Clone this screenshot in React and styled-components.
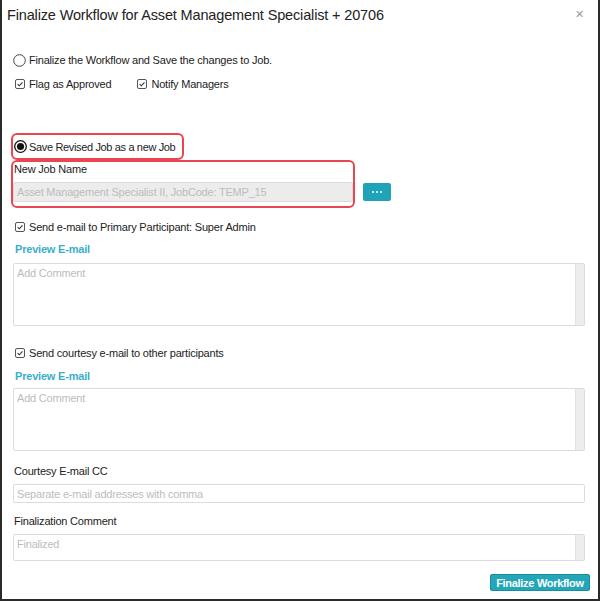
import styled, { createGlobalStyle } from "styled-components";

const GlobalStyle = createGlobalStyle`
  body {
    margin: 0;
    font-family: "Liberation Sans", Arial, sans-serif;
    color: #222;
  }
`;

const Dialog = styled.div`
  box-sizing: border-box;
  width: 600px;
  height: 601px;
  background: #fff;
  border-left: 2px solid #2a2a2a;
  border-right: 2px solid #2a2a2a;
  border-bottom: 2px solid #2a2a2a;
  display: flex;
  flex-direction: column;
  letter-spacing: -0.2px;
`;

const Header = styled.div`
  display: flex;
  justify-content: space-between;
  align-items: center;
  height: 30px;
  padding: 0 14px 0 5px;
`;

const Title = styled.h1`
  margin: 0;
  font-size: 14.5px;
  font-weight: normal;
  letter-spacing: -0.15px;
  color: #222;
`;

const Close = styled.button`
  border: none;
  background: none;
  padding: 0 0 2px;
  color: #999;
  font-size: 11px;
  line-height: 1;
  cursor: pointer;
`;

const Body = styled.div`
  display: flex;
  flex-direction: column;
  padding: 0 13px 0 9px;
`;

const Row = styled.label`
  display: flex;
  align-items: center;
  gap: ${(p) => p.$gap || 0}px;
  height: 14px;
  margin-top: ${(p) => p.$top || 0}px;
  padding-left: ${(p) => p.$indent || 0}px;
  font-size: 11px;
  line-height: 14px;
  white-space: nowrap;
  letter-spacing: ${(p) => p.$tight ? "-0.35px" : "inherit"};
  color: #222;
`;

const Option = styled.span`
  display: inline-flex;
  align-items: center;
  gap: ${(p) => p.$gap || 4}px;
`;

const Highlight = styled.div`
  box-sizing: border-box;
  width: ${(p) => p.$width}px;
  border: 2px solid #e9464f;
  border-radius: 6px;
`;

const RadioBox = styled(Highlight)`
  margin-top: 42px;
  height: 27px;
  display: flex;
  align-items: center;
  padding-left: 1px;
`;

const NameRow = styled.div`
  display: flex;
  align-items: flex-end;
`;

const NameBox = styled(Highlight)`
  display: flex;
  flex-direction: column;
  padding-bottom: 4px;
`;

const Label = styled.div`
  font-size: 11px;
  line-height: 14px;
  color: #222;
  margin-top: ${(p) => p.$top || 0}px;
  padding-left: ${(p) => p.$indent ?? 3}px;
`;

const TextInput = styled.input`
  box-sizing: border-box;
  width: ${(p) => (p.$width ? `${p.$width}px` : "auto")};
  height: ${(p) => p.$height || 20}px;
  margin: ${(p) => p.$top || 0}px 0 0 ${(p) => p.$left || 0}px;
  padding: 0 3px;
  border: 1px solid #dcdcdc;
  border-radius: 2px;
  background: ${(p) => (p.disabled ? "#ececec" : "#fff")};
  font-family: inherit;
  font-size: 11px;
  letter-spacing: -0.2px;
  color: #222;

  &::placeholder {
    color: #bcbcbc;
  }
`;

const DotsButton = styled.button`
  width: 28px;
  height: 18px;
  margin: 0 0 7px 8px;
  padding: 0;
  border: none;
  border-radius: 2px;
  background: #1fa3b6;
  display: flex;
  align-items: center;
  justify-content: center;
  gap: 2px;
  cursor: pointer;
`;

const Dot = styled.span`
  width: 2px;
  height: 2px;
  border-radius: 50%;
  background: #fff;
`;

const PreviewLink = styled.a`
  display: block;
  margin-top: ${(p) => p.$top || 0}px;
  padding-left: 4px;
  font-size: 11px;
  line-height: 14px;
  font-weight: bold;
  color: #3aaec9;
  text-decoration: none;
  cursor: pointer;
`;

const Comment = styled.textarea`
  box-sizing: border-box;
  display: block;
  width: 572px;
  height: ${(p) => p.$height}px;
  margin: ${(p) => p.$top || 0}px 0 0 2px;
  padding: 2px 3px;
  border: 1px solid #dcdcdc;
  border-radius: 2px;
  resize: none;
  overflow: hidden;
  background: linear-gradient(
    to left,
    #ededed 8px,
    #e2e2e2 8px,
    #e2e2e2 9px,
    #fff 9px
  );
  font-family: inherit;
  font-size: 11px;
  line-height: 14px;
  letter-spacing: -0.2px;
  color: #222;

  &::placeholder {
    color: #bcbcbc;
  }
`;

const Footer = styled.div`
  display: flex;
  justify-content: flex-end;
  padding: 13px 8px 0 0;
`;

const PrimaryButton = styled.button`
  box-sizing: border-box;
  width: 100px;
  height: 17px;
  padding: 0;
  border: 1px solid #1a8e9e;
  border-radius: 2px;
  background: #22a6b8;
  color: #fff;
  font-family: inherit;
  font-size: 11px;
  font-weight: bold;
  letter-spacing: -0.3px;
  cursor: pointer;
`;

function Radio({ checked }) {
  return (
    <svg width="13" height="13" viewBox="0 0 13 13">
      <circle
        cx="6.5"
        cy="6.5"
        r="5.8"
        fill="#fff"
        stroke={checked ? "#111" : "#444"}
        strokeWidth={checked ? 1.3 : 1}
      />
      {checked && <circle cx="6.5" cy="6.5" r="3.6" fill="#111" />}
    </svg>
  );
}

function Check() {
  return (
    <svg width="10" height="10" viewBox="0 0 10 10">
      <rect
        x="0.5"
        y="0.5"
        width="9"
        height="9"
        rx="1.5"
        fill="#fff"
        stroke="#555"
      />
      <path
        d="M2.6 5.1 L4.3 6.8 L7.5 3.3"
        fill="none"
        stroke="#333"
        strokeWidth="1.1"
      />
    </svg>
  );
}

export default function App() {
  return (
    <>
      <GlobalStyle />
      <Dialog>
        <Header>
          <Title>Finalize Workflow for Asset Management Specialist + 20706</Title>
          <Close>✕</Close>
        </Header>
        <Body>
          <Row $top={23} $indent={2} $gap={3}>
            <Radio />
            Finalize the Workflow and Save the changes to Job.
          </Row>
          <Row $top={10} $indent={4} $gap={26}>
            <Option>
              <Check />
              Flag as Approved
            </Option>
            <Option>
              <Check />
              Notify Managers
            </Option>
          </Row>

          <RadioBox $width={173}>
            <Row $gap={2} $tight>
              <Radio checked />
              Save Revised Job as a new Job
            </Row>
          </RadioBox>

          <NameRow>
            <NameBox $width={344}>
              <Label $indent={1}>New Job Name</Label>
              <TextInput
                disabled
                $top={6}
                $width={340}
                placeholder="Asset Management Specialist II, JobCode: TEMP_15"
              />
            </NameBox>
            <DotsButton>
              <Dot />
              <Dot />
              <Dot />
            </DotsButton>
          </NameRow>

          <Row $top={12} $indent={4} $gap={4}>
            <Check />
            Send e-mail to Primary Participant: Super Admin
          </Row>
          <PreviewLink $top={8}>Preview E-mail</PreviewLink>
          <Comment $top={7} $height={63} placeholder="Add Comment" />

          <Row $top={20} $indent={4} $gap={4}>
            <Check />
            Send courtesy e-mail to other participants
          </Row>
          <PreviewLink $top={9}>Preview E-mail</PreviewLink>
          <Comment $top={5} $height={63} placeholder="Add Comment" />

          <Label $top={13}>Courtesy E-mail CC</Label>
          <TextInput
            $top={6}
            $left={2}
            $height={19}
            $width={572}
            placeholder="Separate e-mail addresses with comma"
          />

          <Label $top={11}>Finalization Comment</Label>
          <Comment $top={6} $height={27} placeholder="Finalized" />
        </Body>
        <Footer>
          <PrimaryButton>Finalize Workflow</PrimaryButton>
        </Footer>
      </Dialog>
    </>
  );
}
